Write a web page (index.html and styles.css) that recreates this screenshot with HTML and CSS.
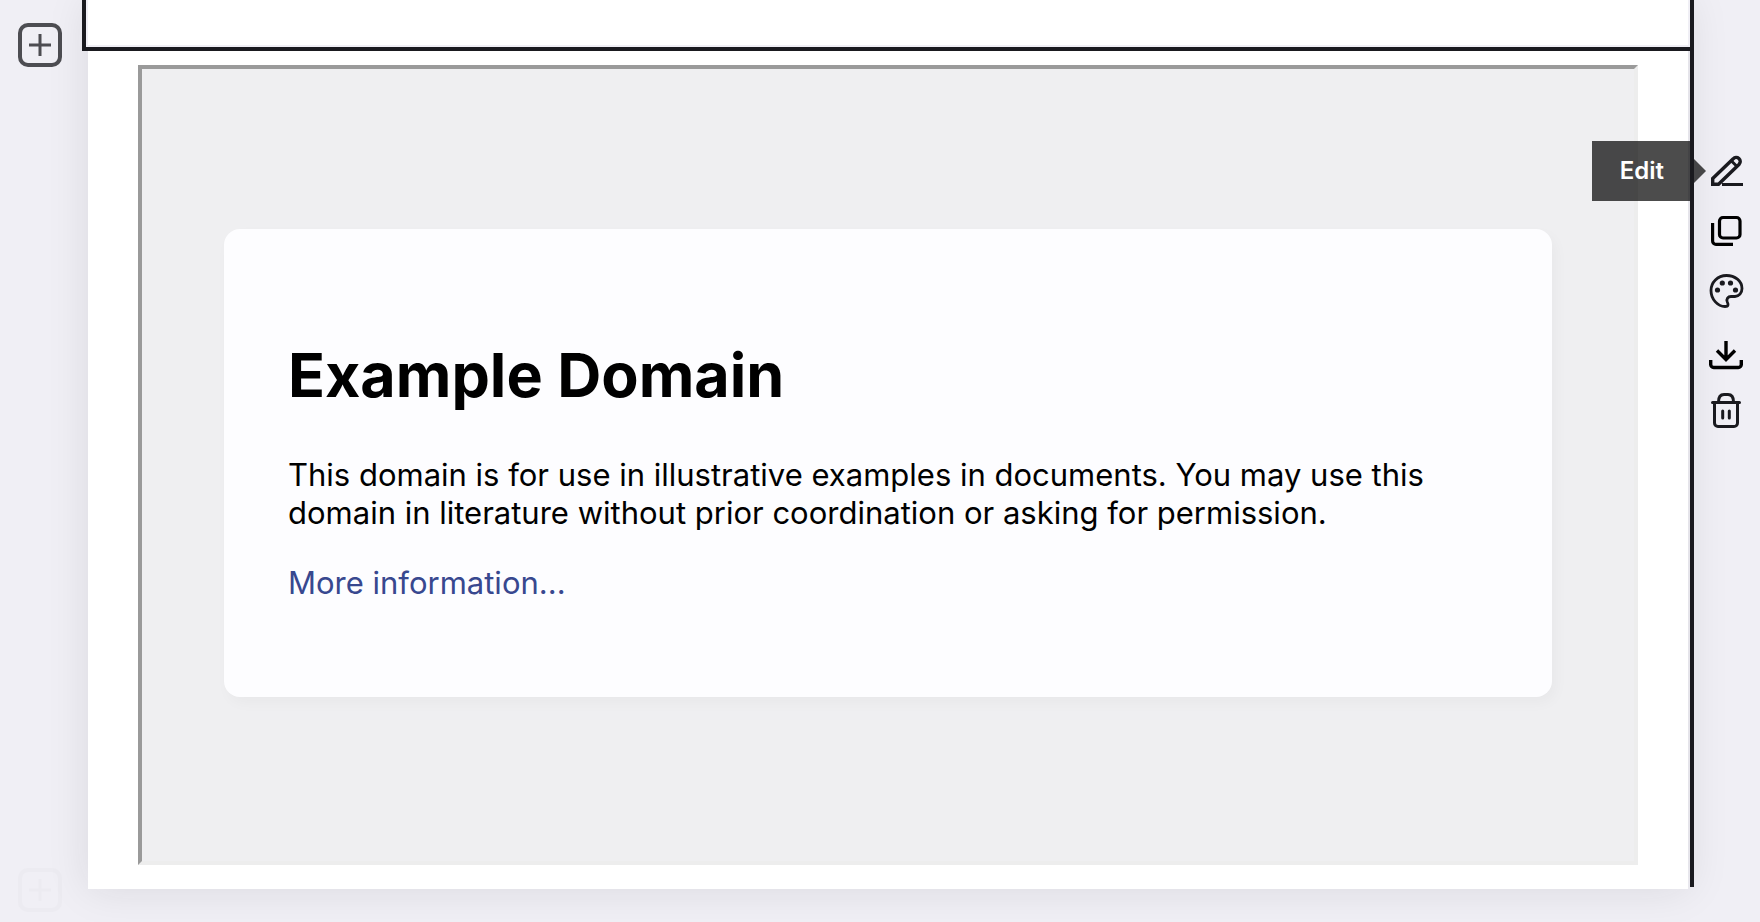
FILE: index.html
```html
<!DOCTYPE html>
<html lang="en">
<head>
  <meta charset="UTF-8">
  <title>Page editor</title>
  <link rel="stylesheet" href="styles.css">
</head>
<body>
  <div class="editor">
    <aside class="left-rail">
      <button class="add-btn" type="button" aria-label="Add block">
        <svg viewBox="0 0 44 44" width="44" height="44">
          <rect x="2" y="2" width="40" height="40" rx="8" fill="none" stroke="currentColor" stroke-width="4"/>
          <path d="M22 11v22M11 22h22" fill="none" stroke="currentColor" stroke-width="3"/>
        </svg>
      </button>
      <button class="add-btn add-btn-faded" type="button" aria-label="Add block below">
        <svg viewBox="0 0 44 44" width="44" height="44">
          <rect x="2" y="2" width="40" height="40" rx="8" fill="none" stroke="currentColor" stroke-width="4"/>
          <path d="M22 11v22M11 22h22" fill="none" stroke="currentColor" stroke-width="3"/>
        </svg>
      </button>
    </aside>

    <main class="page">
      <div class="block-outline"></div>
      <section class="embed-block">
        <div class="frame">
          <article class="card">
            <h1>Example Domain</h1>
            <p>This domain is for use in illustrative examples in documents. You may use this domain in literature without prior coordination or asking for permission.</p>
            <p><a href="#">More information...</a></p>
          </article>
        </div>
      </section>
      <div class="selection-line"></div>
    </main>

    <aside class="toolbar">
      <button class="tool" type="button" aria-label="Edit">
        <svg viewBox="0 0 36 36" width="36" height="36" fill="none" stroke="currentColor" stroke-width="3.4">
          <path d="M4.700 31.300V25.500L25.200 5.800a3.900 3.900 0 0 1 6 5.400L10.500 31.300z"/>
          <path d="M23.500 8l5 5" stroke-width="3"/>
          <path d="M14 31.500h21" stroke-width="3"/>
        </svg>
        <span class="tooltip">Edit</span>
      </button>
      <button class="tool tool-black" type="button" aria-label="Duplicate">
        <svg viewBox="0 0 36 36" width="36" height="36" fill="none" stroke="currentColor" stroke-width="3.200">
          <rect x="11.500" y="4.500" width="20.500" height="20.500" rx="3.500"/>
          <path d="M4.600 10v18a3.400 3.400 0 0 0 3.400 3.400H25"/>
        </svg>
      </button>
      <button class="tool" type="button" aria-label="Theme">
        <svg viewBox="0 0 36 36" width="36" height="36" fill="none" stroke="currentColor" stroke-width="2.800">
          <path d="M18.500 2.500C9.500 2.500 3 9.500 3 17.500c0 9 7 16 14 16 3.500 0 3.500-2 2.300-4.500-1.300-3 .7-5.500 3.700-5.500h4c4 0 7-3.500 7-8C34 8 27 2.500 18.500 2.500z"/>
          <g fill="currentColor" stroke="none">
            <circle cx="9.500" cy="17" r="2.600"/>
            <circle cx="14.300" cy="10" r="2.600"/>
            <circle cx="22.500" cy="10" r="2.600"/>
            <circle cx="27.500" cy="17" r="2.600"/>
          </g>
        </svg>
      </button>
      <button class="tool tool-black tool-download" type="button" aria-label="Download">
        <svg viewBox="0 0 36 36" width="36" height="36" fill="none" stroke="currentColor" stroke-width="3.400">
          <path d="M18 4v18M9 13.500l9 9 9-9"/>
          <path d="M2.700 23v4.500a3 3 0 0 0 3 3h24.600a3 3 0 0 0 3-3V23"/>
        </svg>
      </button>
      <button class="tool" type="button" aria-label="Delete">
        <svg viewBox="0 0 36 36" width="36" height="36" fill="none" stroke="currentColor" stroke-width="3" stroke-linecap="round">
          <path d="M4.500 9.500h27M6.500 9.500V30a3.500 3.500 0 0 0 3.500 3.500h16a3.500 3.500 0 0 0 3.500-3.500V9.500"/>
          <path d="M10.500 9c0-5 2-7.500 5.500-7.500h4c3.500 0 5.500 2.500 5.500 7.500M14.700 18v7M21.300 18v7"/>
        </svg>
      </button>
    </aside>
  </div>
</body>
</html>
```
FILE: styles.css
```css
* {
  box-sizing: border-box;
}

body {
  margin: 0;
  background: #f0eff5;
  color: #000;
  font-family: Inter, "Liberation Sans", sans-serif;
}

button {
  padding: 0;
  border: none;
  background: none;
  cursor: pointer;
}

svg {
  display: block;
}

.editor {
  display: flex;
  min-height: 100vh;
  overflow: hidden;
}

/* left side: add buttons */
.left-rail {
  width: 88px;
  flex-shrink: 0;
  display: flex;
  flex-direction: column;
  justify-content: space-between;
  padding: 23px 18px 10px;
}

.add-btn {
  width: 44px;
  color: #4d4d52;
}

.add-btn-faded {
  opacity: 0.02;
}

/* page */
.page {
  position: relative;
  flex: 1;
  margin-bottom: 33px;
  background: #fff;
  box-shadow: 0 0 40px rgba(26, 26, 31, 0.1);
}

.block-outline {
  height: 51px;
  margin: 0 -6px;
  border: 4px solid #1a1a1f;
  border-top: none;
  background: #fff;
  box-shadow: inset 2px -2px #f0eff5, inset -2px -2px #f0eff5;
}

.embed-block {
  padding: 14px 50px 24px;
}

.frame {
  padding: 160px 82px 164px;
  border: 4px solid;
  border-color: #9a9a9a #ededed #ededed #9a9a9a;
  background: #efeff1;
}

.card {
  padding: 108px 64px 63px;
  border-radius: 16px;
  background: #fdfdff;
  box-shadow: 4px 6px 14px rgba(0, 0, 0, 0.03);
}

.card h1 {
  margin: 0 0 43px;
  font-size: 61px;
  line-height: 76px;
  font-weight: 700;
}

.card p {
  margin: 0 0 32px;
  font-size: 31px;
  line-height: 38px;
}

.card a {
  color: #38488f;
  text-decoration: none;
}

.selection-line {
  position: absolute;
  top: 0;
  right: -6px;
  bottom: 2px;
  width: 4px;
  background: #1a1a1f;
}

/* right side: block tools */
.toolbar {
  position: relative;
  width: 72px;
  flex-shrink: 0;
  display: flex;
  flex-direction: column;
  align-items: center;
  gap: 24px;
  padding: 153px 0 0 4px;
}

.tool {
  position: relative;
  width: 36px;
  height: 36px;
  color: #1a1a1f;
}

.tool-black {
  color: #000;
}

.tool-download {
  top: 4px;
}

.tooltip {
  position: absolute;
  top: -12px;
  right: 54px;
  padding: 0 26px 0 28px;
  background: rgba(0, 0, 0, 0.7);
  color: #fff;
  font-family: Inter, "Liberation Sans", sans-serif;
  font-size: 24px;
  line-height: 60px;
  font-weight: 600;
}

.tooltip::after {
  content: "";
  position: absolute;
  top: 18px;
  left: calc(100% + 4px);
  border: 12px solid transparent;
  border-left-color: rgba(0, 0, 0, 0.7);
  border-right: none;
}
```
